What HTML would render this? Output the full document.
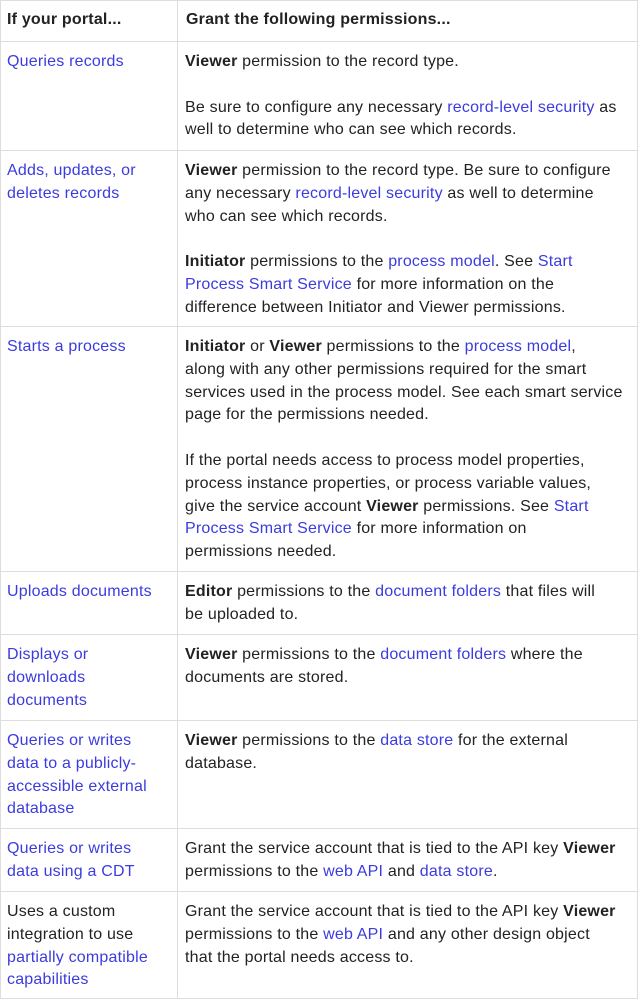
<!DOCTYPE html>
<html><head><meta charset="utf-8"><style>
html,body{margin:0;padding:0;background:#fff;}
body{font-family:"Liberation Sans",Arial,sans-serif;font-size:16px;color:#222;width:640px;height:1000px;overflow:hidden;}
table{border-collapse:collapse;width:638px;table-layout:fixed;}
td,th{border:1px solid #ddd;vertical-align:top;line-height:22.8px;padding:9px 6px 6px 7px;white-space:nowrap;letter-spacing:0.2px;text-align:left;}
th{font-weight:bold;padding:8px 6px 8px 8px;}
td:first-child,th:first-child{width:164px;padding-left:6px;}
a{color:#3b3bdf;text-decoration:none;}
p{margin:0;}
p+p{margin-top:22.8px;}
b{color:#222;}
</style></head><body>
<table>
<tr style="height:41px"><th>If your portal...</th><th>Grant the following permissions...</th></tr>
<tr style="height:109px"><td><a>Queries records</a></td><td><p><b>Viewer</b> permission to the record type.</p><p>Be sure to configure any necessary <a>record-level security</a> as<br>well to determine who can see which records.</p></td></tr>
<tr style="height:176px"><td><a>Adds, updates, or<br>deletes records</a></td><td><p><b>Viewer</b> permission to the record type. Be sure to configure<br>any necessary <a>record-level security</a> as well to determine<br>who can see which records.</p><p><b>Initiator</b> permissions to the <a>process model</a>. See <a>Start<br>Process Smart Service</a> for more information on the<br>difference between Initiator and Viewer permissions.</p></td></tr>
<tr style="height:245px"><td><a>Starts a process</a></td><td><p><b>Initiator</b> or <b>Viewer</b> permissions to the <a>process model</a>,<br>along with any other permissions required for the smart<br>services used in the process model. See each smart service<br>page for the permissions needed.</p><p>If the portal needs access to process model properties,<br>process instance properties, or process variable values,<br>give the service account <b>Viewer</b> permissions. See <a>Start<br>Process Smart Service</a> for more information on<br>permissions needed.</p></td></tr>
<tr style="height:63px"><td><a>Uploads documents</a></td><td><p><b>Editor</b> permissions to the <a>document folders</a> that files will<br>be uploaded to.</p></td></tr>
<tr style="height:86px"><td><a>Displays or<br>downloads<br>documents</a></td><td><p><b>Viewer</b> permissions to the <a>document folders</a> where the<br>documents are stored.</p></td></tr>
<tr style="height:108px"><td><a>Queries or writes<br>data to a publicly-<br>accessible external<br>database</a></td><td><p><b>Viewer</b> permissions to the <a>data store</a> for the external<br>database.</p></td></tr>
<tr style="height:63px"><td><a>Queries or writes<br>data using a CDT</a></td><td><p>Grant the service account that is tied to the API key <b>Viewer</b><br>permissions to the <a>web API</a> and <a>data store</a>.</p></td></tr>
<tr style="height:107px"><td>Uses a custom<br>integration to use<br><a>partially compatible<br>capabilities</a></td><td><p>Grant the service account that is tied to the API key <b>Viewer</b><br>permissions to the <a>web API</a> and any other design object<br>that the portal needs access to.</p></td></tr>
</table>
</body></html>
